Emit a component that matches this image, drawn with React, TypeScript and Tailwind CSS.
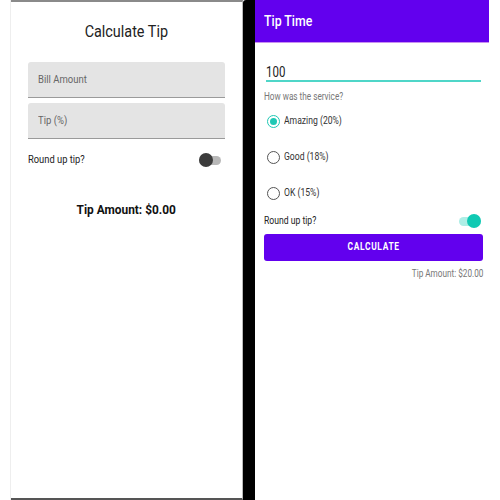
import type { ReactNode } from 'react';
import { twMerge } from 'tailwind-merge';

function T({ children, className }: { children: ReactNode; className?: string }) {
	return <span className={twMerge('inline-block origin-left scale-x-[0.82] whitespace-nowrap', className)}>{children}</span>;
}

function Field({ label }: { label: string }) {
	return (
		<div className="flex h-[36px] items-center rounded-t-[3px] border-b border-[#9a9a9a] bg-[#e4e4e4] px-[10px] text-[10px] text-[#666]">
			<T className="scale-x-[0.95]">{label}</T>
		</div>
	);
}

function Radio({ label, checked }: { label: string; checked?: boolean }) {
	return (
		<div className="flex h-[36px] items-center gap-[4px]">
			<div
				className={
					checked
						? 'flex size-[13px] shrink-0 items-center justify-center rounded-full border-[1.5px] border-[#1fc8b4]'
						: 'size-[13px] shrink-0 rounded-full border-[1.5px] border-[#555]'
				}
			>
				{checked ? <div className="size-[7px] rounded-full bg-[#1fc8b4]" /> : null}
			</div>
			<T className="text-[10.5px] text-[#333]">{label}</T>
		</div>
	);
}

function Toggle({ on }: { on?: boolean }) {
	return (
		<div className="relative h-[12px] w-[22px]">
			<div
				className={
					on
						? 'absolute inset-x-0 top-[2px] h-[9px] rounded-full bg-[#aeeee6]'
						: 'absolute inset-x-0 top-[2px] h-[9px] rounded-full bg-[#b8b8b8]'
				}
			/>
			<div
				className={
					on
						? 'absolute right-0 top-[-1px] size-[14px] rounded-full bg-[#10c9b3]'
						: 'absolute left-0 top-[-1px] size-[14px] rounded-full bg-[#3c3c3c]'
				}
			/>
		</div>
	);
}

export default function App() {
	return (
		<div className="flex h-[500px] w-[500px] bg-white font-['Roboto',sans-serif]">
			<div className="w-[11px] border-r border-[#eee]" />
			<div className="flex w-[232px] flex-col border-y-2 border-r border-t-[#8a8a8a] border-b-[#555] border-r-[#bbb] px-[17px]">
				<div className="pt-[18px] text-center text-[16px] text-[#222]">
					<T className="origin-center scale-x-[0.9]">Calculate Tip</T>
				</div>
				<div className="mt-[18px] flex flex-col gap-[5px]">
					<Field label="Bill Amount" />
					<Field label="Tip (%)" />
				</div>
				<div className="mt-[13px] flex items-center justify-between pr-[4px]">
					<T className="scale-x-[0.89] text-[10.5px] text-[#222]">Round up tip?</T>
					<Toggle />
				</div>
				<div className="mt-[33px] text-center text-[12.5px] font-bold text-[#111]">
					<T className="origin-center scale-x-[0.95]">Tip Amount: $0.00</T>
				</div>
			</div>
			<div className="w-[12px] rounded-tl-[3px] bg-black" />
			<div className="flex w-[234px] flex-col">
				<div className="flex h-[43px] items-center border-b border-[#c890f0] bg-[#6200ee] px-[9px] text-[15px] font-medium text-white">
					<T>Tip Time</T>
				</div>
				<div className="flex flex-col pl-[9px] pr-[6px]">
					<div className="mx-[2px] mt-[22px] border-b-2 border-[#4fd6c8] pb-[1px] text-[14px] leading-[14px] text-[#222]">
						<T>100</T>
					</div>
					<div className="mt-[7px] text-[10px] leading-[15px] text-[#777]">
						<T>How was the service?</T>
					</div>
					<div className="-mt-[1px] flex flex-col pl-[3px]">
						<Radio label="Amazing (20%)" checked />
						<Radio label="Good (18%)" />
						<Radio label="OK (15%)" />
					</div>
					<div className="mt-[2px] flex items-center justify-between pr-[2px]">
						<T className="text-[10.5px] text-[#222]">Round up tip?</T>
						<Toggle on />
					</div>
					<button className="mt-[5px] h-[27px] rounded-[3px] bg-[#6200ee] text-[10.5px] font-bold tracking-[0.08em] text-white">
						<T className="origin-center scale-x-[0.8]">CALCULATE</T>
					</button>
					<div className="mt-[5px] text-right text-[10px] text-[#777]">
						<T className="origin-right">Tip Amount: $20.00</T>
					</div>
				</div>
			</div>
			<div className="flex-1" />
		</div>
	);
}
